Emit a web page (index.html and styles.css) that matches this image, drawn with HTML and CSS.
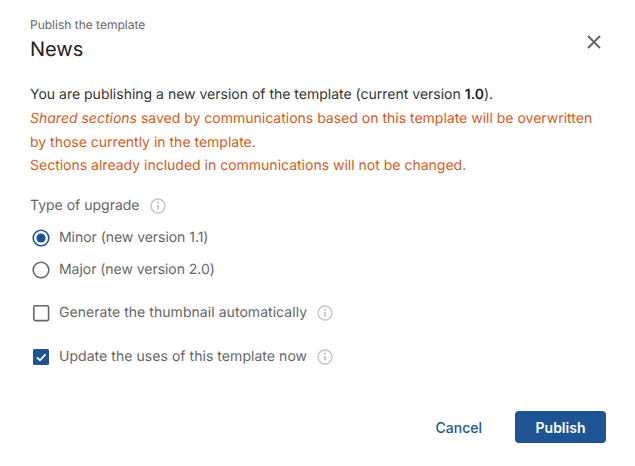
FILE: index.html
```html
<!DOCTYPE html>
<html lang="en">
<head>
  <meta charset="UTF-8">
  <title>Publish the template</title>
  <link rel="stylesheet" href="styles.css">
</head>
<body>
  <div class="dialog">
    <div class="header">
      <div>
        <div class="subtitle">Publish the template</div>
        <h2>News</h2>
      </div>
      <button class="close" aria-label="Close">
        <svg width="16" height="16" viewBox="0 0 16 16"><path d="M2 2L14 14M14 2L2 14" stroke="#666" stroke-width="2" fill="none"/></svg>
      </button>
    </div>

    <div class="message">
      <p>You are publishing a new version of the template (current version <b>1.0</b>).</p>
      <p class="warn"><i>Shared sections</i> saved by communications based on this template will be overwritten by those currently in the template.</p>
      <p class="warn">Sections already included in communications will not be changed.</p>
    </div>

    <div class="upgrade-label">
      Type of upgrade
      <svg class="info" width="16" height="16" viewBox="0 0 16 16"><circle cx="8" cy="8" r="7" fill="none" stroke="#c4c4c4" stroke-width="1.4"/><path d="M8 7v4.5" stroke="#b0b0b0" stroke-width="1.4"/><circle cx="8" cy="4.8" r="0.9" fill="#b0b0b0"/></svg>
    </div>

    <div class="radios">
      <div class="option">
        <svg class="control" width="18" height="18" viewBox="0 0 18 18"><circle cx="9" cy="9" r="7.8" fill="none" stroke="#1f5494" stroke-width="1.6"/><circle cx="9" cy="9" r="4.6" fill="#1f5494"/></svg>
        Minor (new version 1.1)
      </div>
      <div class="option">
        <svg class="control" width="18" height="18" viewBox="0 0 18 18"><circle cx="9" cy="9" r="7.8" fill="none" stroke="#666" stroke-width="1.6"/></svg>
        Major (new version 2.0)
      </div>
    </div>

    <div class="option check-first">
      <svg class="control" width="18" height="18" viewBox="0 0 18 18"><rect x="1.8" y="1.8" width="14.8" height="14.8" rx="1.5" fill="none" stroke="#666" stroke-width="1.6"/></svg>
      Generate the thumbnail automatically
      <svg class="info" width="16" height="16" viewBox="0 0 16 16"><circle cx="8" cy="8" r="7" fill="none" stroke="#c4c4c4" stroke-width="1.4"/><path d="M8 7v4.5" stroke="#b0b0b0" stroke-width="1.4"/><circle cx="8" cy="4.8" r="0.9" fill="#b0b0b0"/></svg>
    </div>

    <div class="option check-second">
      <svg class="control" width="18" height="18" viewBox="0 0 18 18"><rect x="1" y="1" width="16" height="16" rx="1.5" fill="#1f5494"/><path d="M5 9.5L8 12.3L13.5 6.3" stroke="#fff" stroke-width="1.8" fill="none"/></svg>
      Update the uses of this template now
      <svg class="info" width="16" height="16" viewBox="0 0 16 16"><circle cx="8" cy="8" r="7" fill="none" stroke="#c4c4c4" stroke-width="1.4"/><path d="M8 7v4.5" stroke="#b0b0b0" stroke-width="1.4"/><circle cx="8" cy="4.8" r="0.9" fill="#b0b0b0"/></svg>
    </div>

    <div class="footer">
      <button class="cancel">Cancel</button>
      <button class="publish">Publish</button>
    </div>
  </div>
</body>
</html>
```

FILE: styles.css
```css
* {
  box-sizing: border-box;
}

body {
  margin: 0;
  background: #fff;
  font-family: Inter, sans-serif;
  color: #333;
  overflow: hidden;
  text-rendering: geometricPrecision;
}

.dialog {
  width: 635px;
  height: 466px;
  padding: 17px 29px 0 30px;
}

.header {
  display: flex;
  justify-content: space-between;
  align-items: flex-start;
}

.subtitle {
  font-size: 12px;
  line-height: 16px;
  color: #666;
}

h2 {
  margin: 3px 0 0;
  font-size: 20px;
  line-height: 26px;
  font-weight: 400;
  color: #222;
}

.close {
  margin-top: 17px;
  margin-right: 4px;
  padding: 0;
  border: none;
  background: none;
  display: flex;
}

.message {
  margin-top: 21px;
  font-size: 14px;
  line-height: 23.8px;
}

.message p {
  margin: 0;
}

.message b {
  font-weight: 600;
  color: #222;
}

.warn {
  color: #cf5d1e;
}

.upgrade-label {
  margin-top: 16px;
  display: flex;
  align-items: center;
  gap: 10px;
  font-size: 14px;
  line-height: 24px;
  color: #666;
}

.radios {
  margin-top: 8px;
  display: flex;
  flex-direction: column;
  gap: 8px;
}

.option {
  display: flex;
  align-items: center;
  font-size: 14px;
  line-height: 24px;
  color: #666;
}

.radios .option {
  letter-spacing: -0.04px;
}

.control {
  margin-left: 2px;
  margin-right: 9px;
  flex: none;
}

.option .info {
  margin-left: 10px;
}

.check-first {
  margin-top: 19px;
  letter-spacing: 0.05px;
}

.check-second {
  margin-top: 20px;
  letter-spacing: 0.05px;
}

.footer {
  margin-top: 42px;
  display: flex;
  justify-content: flex-end;
  align-items: center;
  gap: 33px;
}

button {
  font-family: Inter, sans-serif;
  cursor: pointer;
}

.cancel {
  padding: 0;
  border: none;
  background: none;
  color: #1f5494;
  font-size: 14px;
  font-weight: 500;
}

.publish {
  width: 91px;
  height: 32px;
  border: none;
  border-radius: 4px;
  background: #1f5494;
  color: #fff;
  font-size: 14px;
  font-weight: 600;
}
```
